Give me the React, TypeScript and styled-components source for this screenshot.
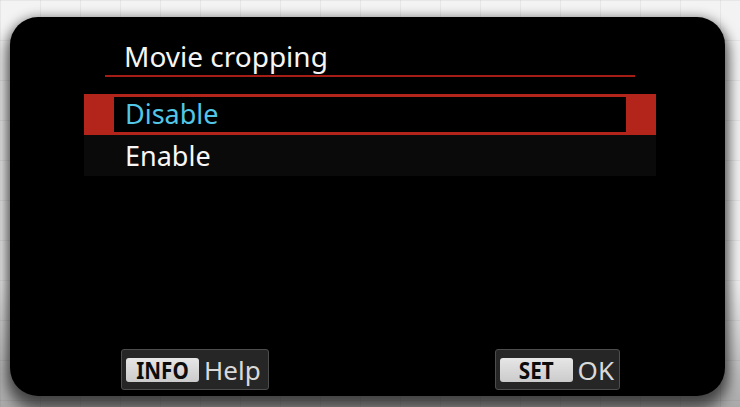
import React, { useState } from 'react';
import styled, { createGlobalStyle } from 'styled-components';

const GlobalStyle = createGlobalStyle`
    html, body {
        margin: 0;
        padding: 0;
        width: 740px;
        height: 407px;
        overflow: hidden;
    }
    body {
        background-color: #f3f3f3;
        background-image:
            linear-gradient(to right, rgba(0, 0, 0, 0.05) 1px, transparent 1px),
            linear-gradient(to bottom, rgba(0, 0, 0, 0.05) 1px, transparent 1px);
        background-size: 40px 40px;
        font-family: "Noto Sans", "Open Sans", sans-serif;
    }
`;

const Stage = styled.div`
    width: 740px;
    height: 407px;
    box-sizing: border-box;
    padding: 17px 15px 12px 10px;
    background: linear-gradient(to bottom, transparent 0, transparent 280px, rgba(0, 0, 0, 0.3) 407px);
`;

const Screen = styled.div`
    width: 715px;
    height: 379px;
    box-sizing: border-box;
    background: #000;
    border-radius: 28px;
    box-shadow: 0 10px 14px 4px rgba(0, 0, 0, 0.55), 0 0 12px rgba(0, 0, 0, 0.3);
    display: flex;
    flex-direction: column;
    padding: 20px 0 6px;
`;

const Header = styled.div`
    margin-left: 95px;
    width: 530px;
    border-bottom: 2px solid #a61d15;
`;

const Title = styled.h1`
    margin: 0;
    padding-left: 19px;
    font-size: 28px;
    font-weight: 400;
    line-height: 38px;
    color: #f5f5f5;
`;

const Options = styled.div`
    margin: 17px 0 0 74px;
    width: 572px;
    display: flex;
    flex-direction: column;
`;

const Option = styled.div<{ $selected?: boolean }>`
    height: 41px;
    box-sizing: border-box;
    padding: ${p => (p.$selected ? '3px 30px' : '0 0 0 41px')};
    background: ${p => (p.$selected ? '#b3241b' : '#0a0a0a')};
    cursor: pointer;
`;

const OptionLabel = styled.div<{ $selected?: boolean }>`
    height: 100%;
    padding-left: ${p => (p.$selected ? '11px' : '0')};
    background: ${p => (p.$selected ? '#000' : 'transparent')};
    font-size: 27px;
    line-height: ${p => (p.$selected ? '34px' : '41px')};
    color: ${p => (p.$selected ? '#52c6e6' : '#f7f7f7')};
`;

const Footer = styled.div`
    margin-top: auto;
    display: flex;
    justify-content: space-between;
    padding: 0 105px 0 111px;
`;

const HintBox = styled.div<{ $trail: number }>`
    height: 41px;
    box-sizing: border-box;
    display: flex;
    align-items: center;
    gap: 5px;
    padding: 0 ${p => p.$trail}px 0 4px;
    background: #262626;
    border: 1px solid #4d4d4d;
    border-radius: 3px;
`;

const Key = styled.span`
    width: 73px;
    height: 24px;
    display: flex;
    align-items: center;
    justify-content: center;
    border-radius: 3px;
    background: linear-gradient(to bottom, #e6e6e6, #cbcbcb);
`;

const KeyLabel = styled.span`
    display: inline-block;
    transform: scale(0.86, 1);
    color: #0c0c0c;
    font-size: 24px;
    font-weight: 700;
    line-height: 24px;
`;

const HintText = styled.span`
    font-size: 26px;
    line-height: 1;
    color: #d9d9d9;
`;

const options = ['Disable', 'Enable'];

export default function App(): React.ReactElement {
    const [selected, setSelected] = useState(0);
    return (
        <>
            <GlobalStyle />
            <Stage>
                <Screen>
                    <Header>
                        <Title>Movie cropping</Title>
                    </Header>
                    <Options>
                        {options.map((label, i) => (
                            <Option key={label} $selected={i === selected} onClick={() => setSelected(i)}>
                                <OptionLabel $selected={i === selected}>{label}</OptionLabel>
                            </Option>
                        ))}
                    </Options>
                    <Footer>
                        <HintBox $trail={7}>
                            <Key><KeyLabel>INFO</KeyLabel></Key>
                            <HintText>Help</HintText>
                        </HintBox>
                        <HintBox $trail={5}>
                            <Key><KeyLabel>SET</KeyLabel></Key>
                            <HintText>OK</HintText>
                        </HintBox>
                    </Footer>
                </Screen>
            </Stage>
        </>
    );
}
